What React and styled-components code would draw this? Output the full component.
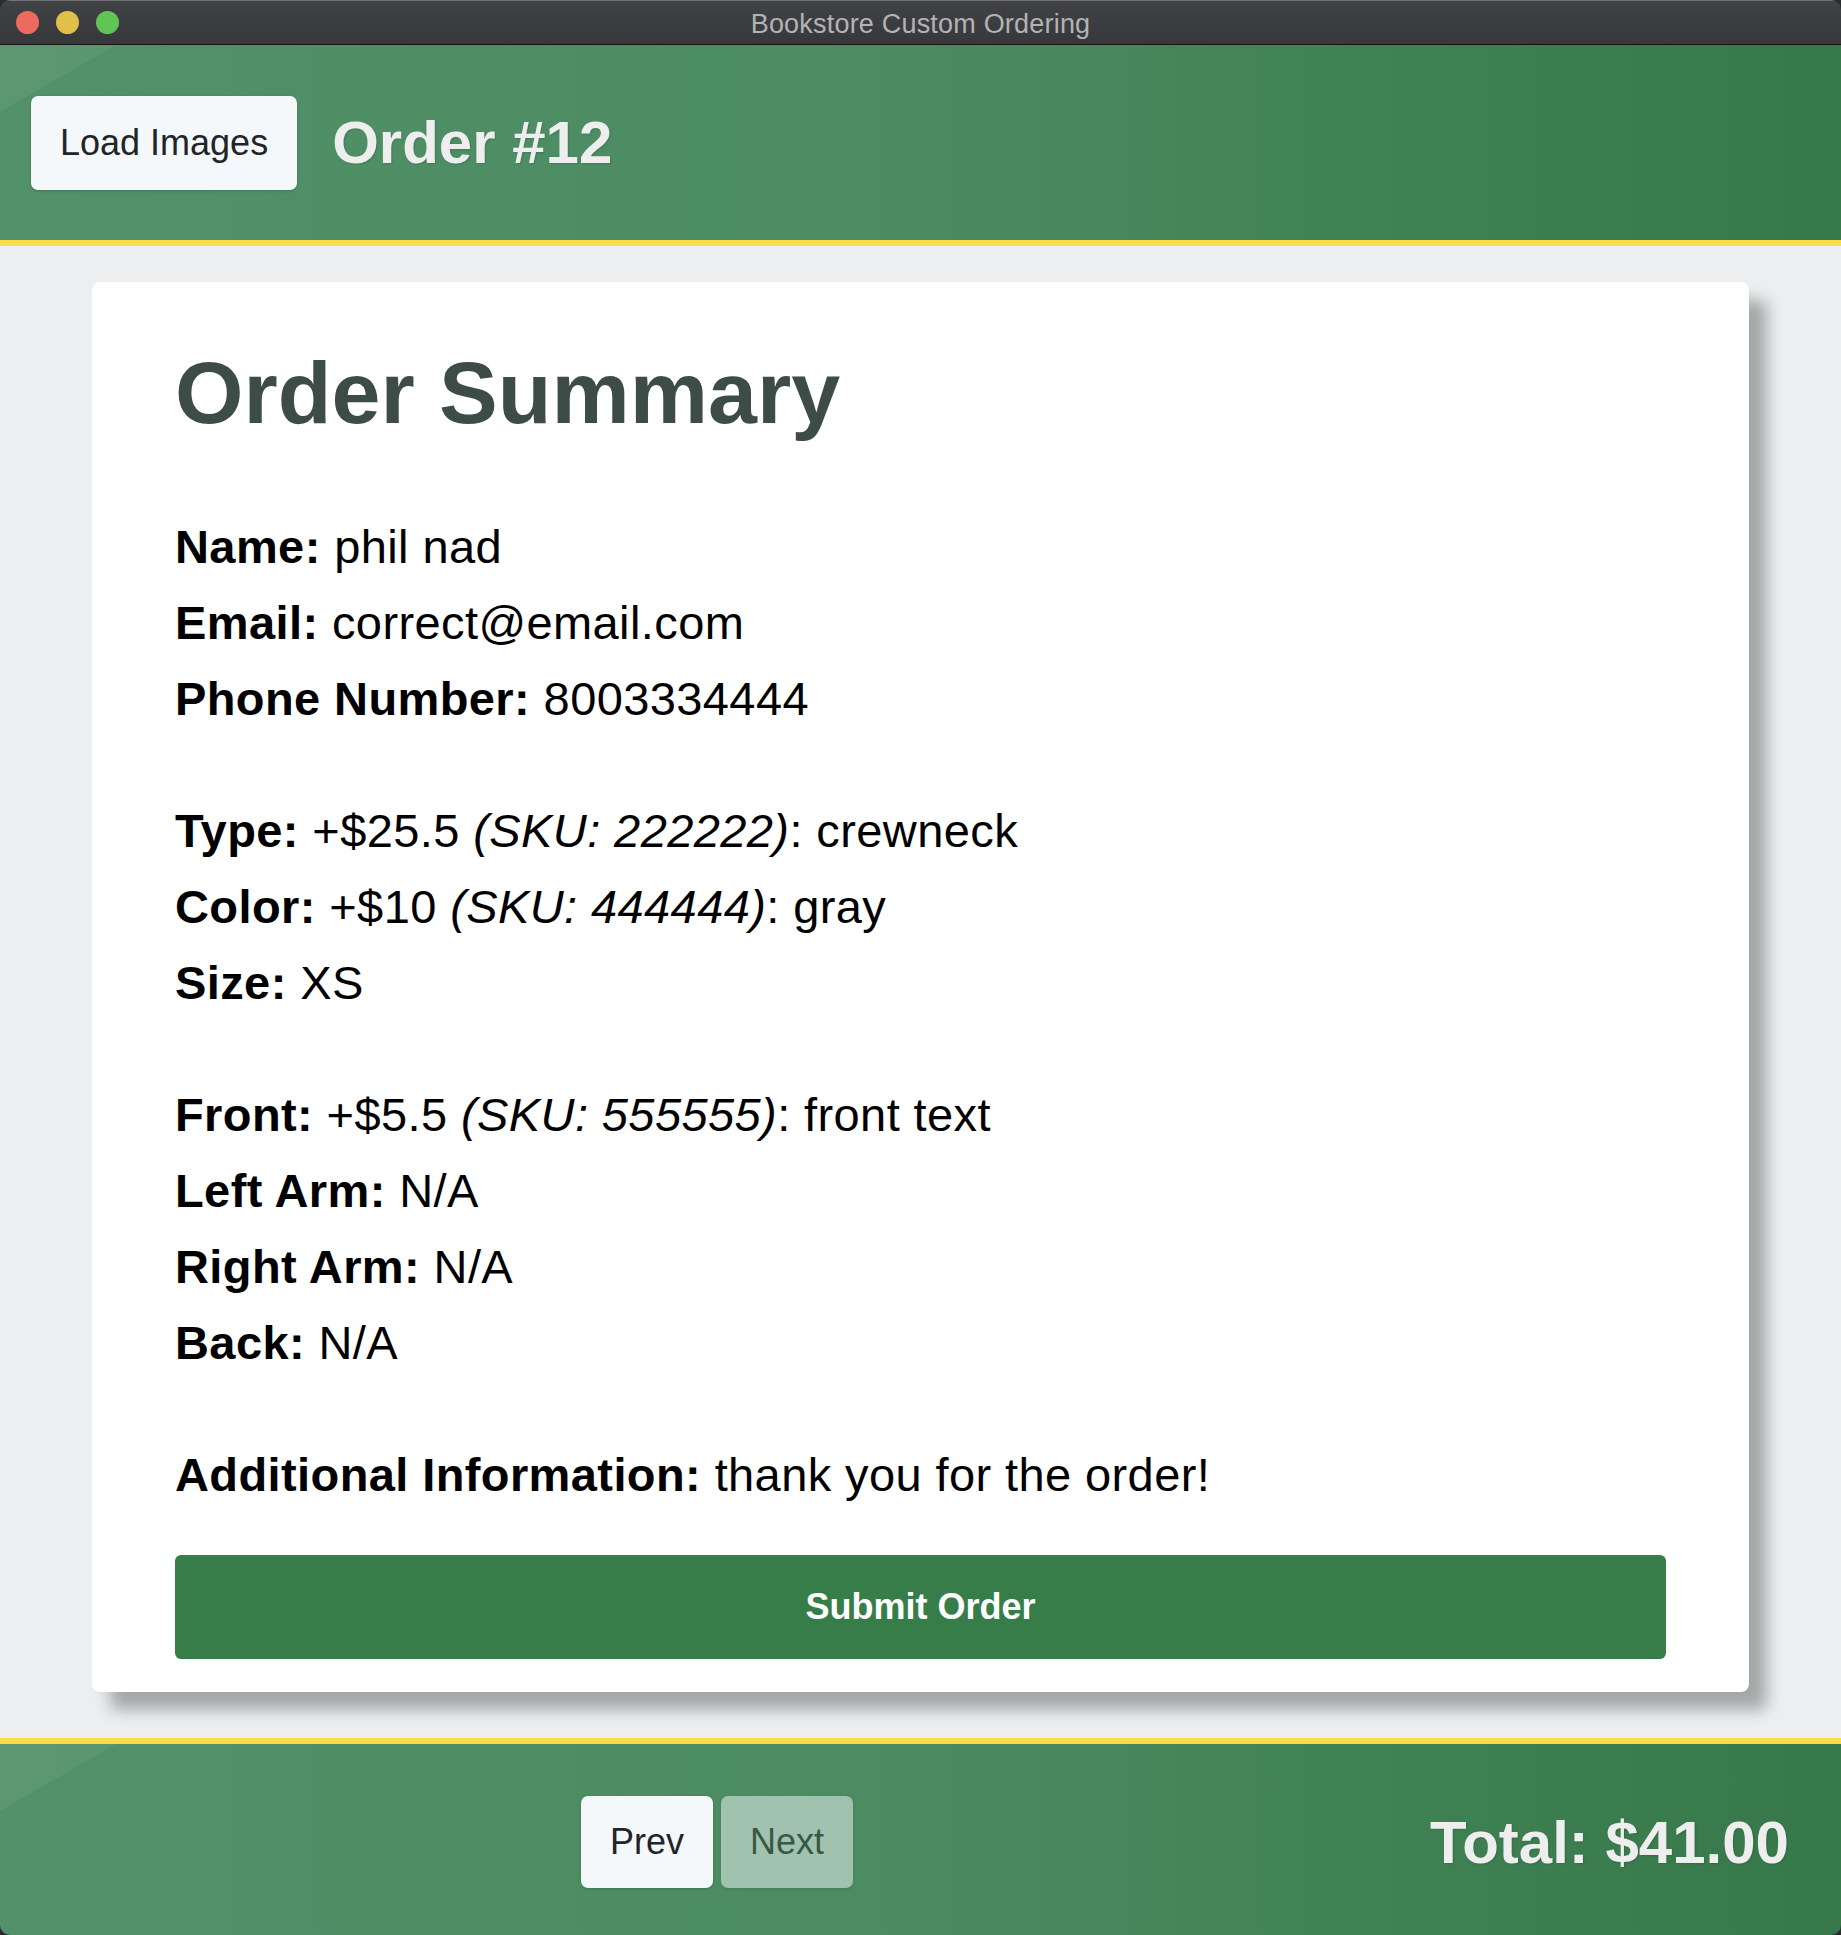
import React from "react"
import styled, { createGlobalStyle } from "styled-components"

const GlobalStyle = createGlobalStyle`
  html, body {
    margin: 0;
    padding: 0;
    background: #2b2c2e;
  }
  * {
    box-sizing: border-box;
  }
`

const Window = styled.div`
  height: 100vh;
  display: flex;
  flex-direction: column;
  border-radius: 10px;
  overflow: hidden;
  font-family: "Liberation Sans", Arial, Helvetica, sans-serif;
`

const TitleBar = styled.div`
  height: 45px;
  flex: none;
  display: grid;
  grid-template-columns: 1fr auto 1fr;
  align-items: center;
  background: linear-gradient(#404246, #36383c);
  border-bottom: 1px solid #141414;
  box-shadow: inset 0 1px 0 rgba(255, 255, 255, 0.25);
`

const Lights = styled.div`
  display: flex;
  gap: 17px;
  padding-left: 16px;
`

const Light = styled.span`
  width: 23px;
  height: 23px;
  border-radius: 50%;
  background: ${(p) => p.$color};
`

const WindowTitle = styled.div`
  padding-top: 4px;
  font-size: 27px;
  color: #b3b3b3;
  letter-spacing: 0.2px;
`

const greenBg = `
  background:
    linear-gradient(150deg, rgba(255, 255, 255, 0.05) 0 58px, transparent 58px),
    linear-gradient(90deg, #52916a 0%, #4b8b5f 50%, #367849 100%);
`

const Header = styled.header`
  height: 201px;
  flex: none;
  display: flex;
  align-items: center;
  gap: 35px;
  padding-left: 31px;
  border-bottom: 6px solid #f9dc4a;
  ${greenBg}
`

const LightButton = styled.button`
  height: ${(p) => p.$h}px;
  padding: 0 ${(p) => p.$px}px;
  border: none;
  border-radius: 7px;
  background: #f5f8fa;
  color: #212529;
  font-family: inherit;
  font-size: 36px;
  box-shadow: 0 1px 3px rgba(0, 0, 0, 0.18);
  cursor: pointer;

  &:disabled {
    opacity: 0.5;
    cursor: default;
  }
`

const BigTitle = styled.h2`
  margin: 0;
  font-size: 60px;
  font-weight: bold;
  color: #eeeeee;
  text-shadow: 1px 1px 2px rgba(0, 0, 0, 0.15);
`

const Main = styled.main`
  flex: 1;
  background: #eceef0;
  padding: 36px 92px 0;
`

const Card = styled.section`
  background: #ffffff;
  border-radius: 8px;
  padding: 58px 83px 33px;
  box-shadow: 18px 18px 16px rgba(0, 0, 0, 0.3);
`

const Heading = styled.h1`
  margin: 0 0 63px;
  font-size: 88px;
  line-height: 1.2;
  font-weight: bold;
  color: #3e4c47;
`

const Group = styled.div`
  & + & {
    margin-top: 56px;
  }
`

const Line = styled.div`
  font-size: 47px;
  line-height: 76px;
  letter-spacing: 0.4px;
  color: #000;
  white-space: nowrap;

  strong {
    font-weight: bold;
  }
  em {
    font-style: italic;
  }
`

const SubmitButton = styled.button`
  display: block;
  width: 100%;
  height: 104px;
  margin-top: 42px;
  border: none;
  border-radius: 6px;
  background: #377d4a;
  color: #ffffff;
  font-family: inherit;
  font-size: 36px;
  font-weight: bold;
  cursor: pointer;
`

const Footer = styled.footer`
  height: 197px;
  flex: none;
  display: flex;
  align-items: center;
  padding: 5px 52px 0 581px;
  border-top: 6px solid #f9dc4a;
  ${greenBg}
`

const NavButtons = styled.div`
  display: flex;
  gap: 8px;
`

const Total = styled(BigTitle)`
  margin-left: auto;
`

const contact = [
  ["Name", "phil nad"],
  ["Email", "correct@email.com"],
  ["Phone Number", "8003334444"],
]

const garment = [
  ["Type", "+$25.5", "222222", "crewneck"],
  ["Color", "+$10", "444444", "gray"],
  ["Size", null, null, "XS"],
]

const prints = [
  ["Front", "+$5.5", "555555", "front text"],
  ["Left Arm", null, null, "N/A"],
  ["Right Arm", null, null, "N/A"],
  ["Back", null, null, "N/A"],
]

const Item = ({ label, price, sku, value }) => (
  <Line>
    <strong>{label}:</strong>{" "}
    {price ? (
      <>
        {price} <em>(SKU: {sku})</em>: {value}
      </>
    ) : (
      value
    )}
  </Line>
)

export default function App() {
  return (
    <>
      <GlobalStyle />
      <Window>
        <TitleBar>
          <Lights>
            <Light $color="#ec6a5e" />
            <Light $color="#e0c04a" />
            <Light $color="#62c454" />
          </Lights>
          <WindowTitle>Bookstore Custom Ordering</WindowTitle>
          <div />
        </TitleBar>

        <Header>
          <LightButton $h={94} $px={29}>Load Images</LightButton>
          <BigTitle>Order #12</BigTitle>
        </Header>

        <Main>
          <Card>
            <Heading>Order Summary</Heading>
            <Group>
              {contact.map(([label, value]) => (
                <Item key={label} label={label} value={value} />
              ))}
            </Group>
            <Group>
              {garment.map(([label, price, sku, value]) => (
                <Item key={label} label={label} price={price} sku={sku} value={value} />
              ))}
            </Group>
            <Group>
              {prints.map(([label, price, sku, value]) => (
                <Item key={label} label={label} price={price} sku={sku} value={value} />
              ))}
            </Group>
            <Group>
              <Item label="Additional Information" value="thank you for the order!" />
            </Group>
            <SubmitButton>Submit Order</SubmitButton>
          </Card>
        </Main>

        <Footer>
          <NavButtons>
            <LightButton $h={92} $px={29}>Prev</LightButton>
            <LightButton $h={92} $px={29} disabled>
              Next
            </LightButton>
          </NavButtons>
          <Total>Total: $41.00</Total>
        </Footer>
      </Window>
    </>
  )
}
